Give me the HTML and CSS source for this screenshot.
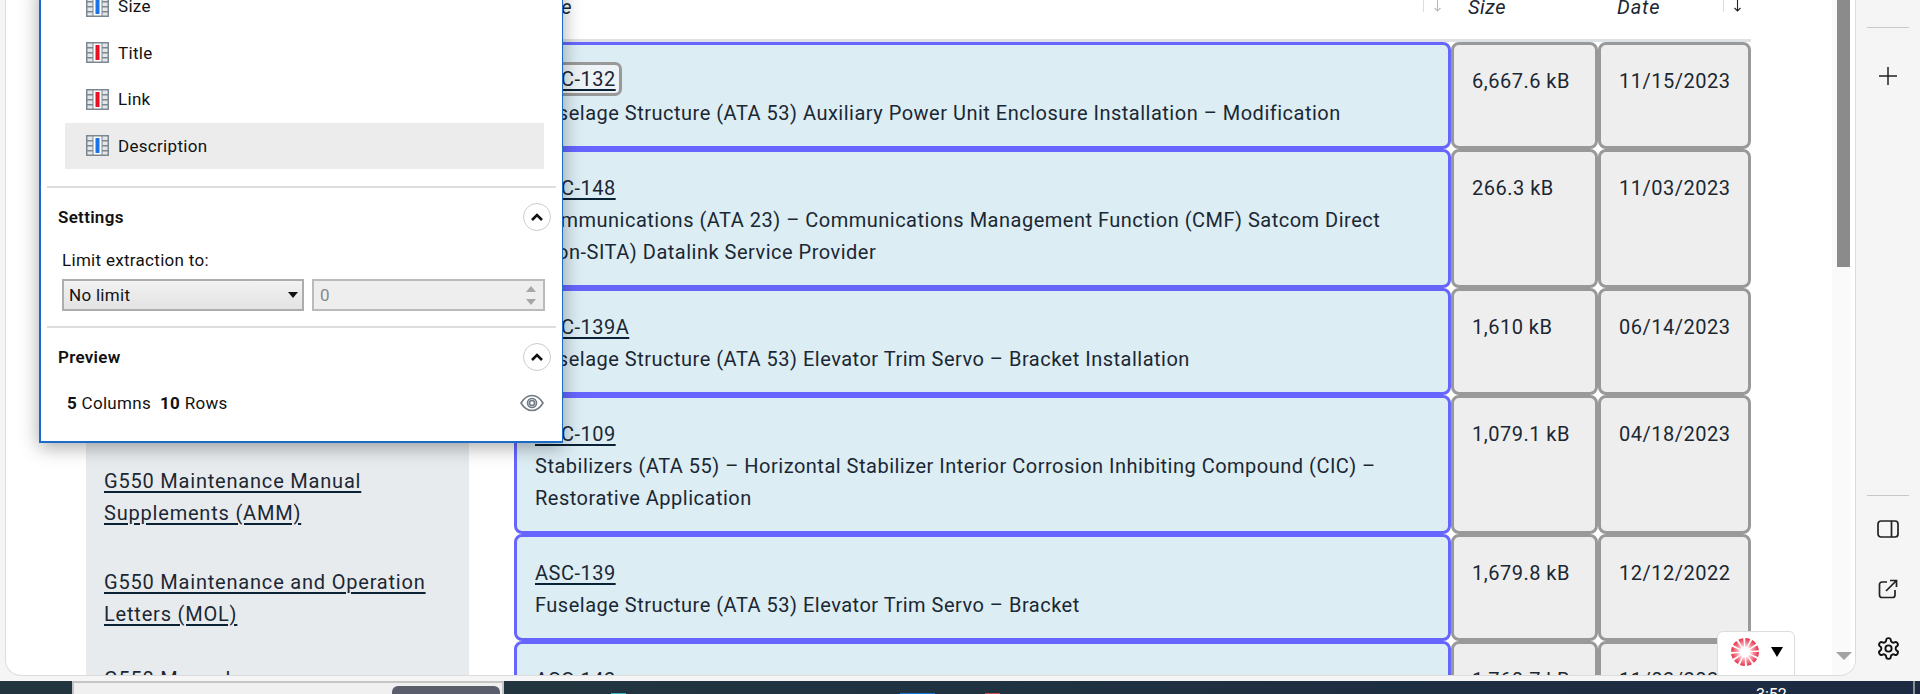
FILE: index.html
```html
<!DOCTYPE html>
<html lang="en">
<head>
    <meta charset="UTF-8">
    <meta name="viewport" content="width=device-width, initial-scale=1.0">
    <title>Service Bulletins</title>
    <link rel="stylesheet" href="styles.css">
</head>
<body>
    <svg class="defs" width="0" height="0">
        <symbol id="col" viewBox="0 0 23 21">
            <rect width="23" height="21" fill="#7d8790"/>
            <g fill="#e4e7ea">
                <rect x="1.5" y="1.5" width="5" height="3.5"/><rect x="1.5" y="6.5" width="5" height="3.5"/><rect x="1.5" y="11.5" width="5" height="3.5"/><rect x="1.5" y="16.5" width="5" height="3"/>
                <rect x="16.5" y="1.5" width="5" height="3.5"/><rect x="16.5" y="6.5" width="5" height="3.5"/><rect x="16.5" y="11.5" width="5" height="3.5"/><rect x="16.5" y="16.5" width="5" height="3"/>
            </g>
            <rect x="7.5" y="1.5" width="8" height="18" fill="#fff"/>
            <rect x="9.5" y="3" width="4" height="15" fill="currentColor"/>
        </symbol>
        <symbol id="chev" viewBox="0 0 28 28">
            <path d="M9 17l5-5 5 5" fill="none" stroke="#111" stroke-width="2.6"/>
        </symbol>
        <symbol id="sort-arrow" viewBox="0 0 9 13">
            <path d="M4.500 0v12M1.500 9l3 3 3-3" fill="none" stroke="currentColor" stroke-width="1.100"/>
        </symbol>
    </svg>

    <div class="browser">
        <div class="window">
            <div class="main">
                <nav class="side-nav">
                    <a href="#">G550 Maintenance Manual Supplements (AMM)</a>
                    <a href="#">G550 Maintenance and Operation Letters (MOL)</a>
                    <a href="#" class="nav-last">G550 Manuals</a>
                </nav>

                <table class="doc-table">
                    <colgroup>
                        <col class="col-title"><col class="col-size"><col class="col-date">
                    </colgroup>
                    <thead>
                        <tr>
                            <th><div class="th-inner"><span>Title</span><span class="sort"><svg width="9" height="13"><use href="#sort-arrow"/></svg></span></div></th>
                            <th class="th-size">Size</th>
                            <th class="th-date"><div class="th-inner"><span>Date</span><span class="sort sort-active"><svg width="9" height="13"><use href="#sort-arrow"/></svg></span></div></th>
                        </tr>
                    </thead>
                    <tbody>
                        <tr>
                            <td class="doc"><a href="#" class="focused">ASC-132</a>Fuselage Structure (ATA 53) Auxiliary Power Unit Enclosure Installation – Modification</td>
                            <td class="meta">6,667.6 kB</td>
                            <td class="meta">11/15/2023</td>
                        </tr>
                        <tr>
                            <td class="doc"><a href="#">ASC-148</a><br>Communications (ATA 23) – Communications Management Function (CMF) Satcom Direct<br>(Non-SITA) Datalink Service Provider</td>
                            <td class="meta">266.3 kB</td>
                            <td class="meta">11/03/2023</td>
                        </tr>
                        <tr>
                            <td class="doc"><a href="#">ASC-139A</a><br>Fuselage Structure (ATA 53) Elevator Trim Servo – Bracket Installation</td>
                            <td class="meta">1,610 kB</td>
                            <td class="meta">06/14/2023</td>
                        </tr>
                        <tr>
                            <td class="doc"><a href="#">ASC-109</a><br>Stabilizers (ATA 55) – Horizontal Stabilizer Interior Corrosion Inhibiting Compound (CIC) – Restorative Application</td>
                            <td class="meta">1,079.1 kB</td>
                            <td class="meta">04/18/2023</td>
                        </tr>
                        <tr>
                            <td class="doc"><a href="#">ASC-139</a><br>Fuselage Structure (ATA 53) Elevator Trim Servo – Bracket</td>
                            <td class="meta">1,679.8 kB</td>
                            <td class="meta">12/12/2022</td>
                        </tr>
                        <tr>
                            <td class="doc"><a href="#">ASC-142</a><br>Fuselage Structure (ATA 53)</td>
                            <td class="meta">1,760.7 kB</td>
                            <td class="meta">11/02/2023</td>
                        </tr>
                    </tbody>
                </table>

                <div class="scrollbar">
                    <div class="scroll-thumb"></div>
                    <div class="scroll-down"></div>
                </div>
            </div>

            <!-- extraction panel, lies over the page -->
            <div class="popup">
                <ul class="col-list">
                    <li class="blue"><svg class="col-icon"><use href="#col"/></svg>Size</li>
                    <li class="red"><svg class="col-icon"><use href="#col"/></svg>Title</li>
                    <li class="red"><svg class="col-icon"><use href="#col"/></svg>Link</li>
                    <li class="blue selected"><svg class="col-icon"><use href="#col"/></svg>Description</li>
                </ul>
                <hr class="popup-sep">
                <div class="section-head">
                    <span>Settings</span>
                    <span class="round-btn"><svg width="28" height="28"><use href="#chev"/></svg></span>
                </div>
                <div class="settings">
                    <div class="limit-label">Limit extraction to:</div>
                    <div class="limit-row">
                        <div class="fake-select">No limit<span class="select-arrow"></span></div>
                        <div class="fake-number">0<span class="spin"><i class="spin-up"></i><i class="spin-down"></i></span></div>
                    </div>
                </div>
                <hr class="popup-sep popup-sep-tight">
                <div class="section-head">
                    <span>Preview</span>
                    <span class="round-btn"><svg width="28" height="28"><use href="#chev"/></svg></span>
                </div>
                <div class="stats">
                    <span><b>5</b> Columns &nbsp;<b>10</b> Rows</span>
                    <svg width="24" height="18" viewBox="0 0 24 18" fill="none" stroke="#6f7a84" stroke-width="1.6">
                        <path d="M1 9C4 4 8 1.5 12 1.5S20 4 23 9c-3 5-7 7.5-11 7.5S4 14 1 9z"/>
                        <circle cx="12" cy="9" r="4.5"/>
                        <circle cx="12" cy="9" r="2.5"/>
                    </svg>
                </div>
            </div>

            <div class="widget">
                <svg width="28" height="28" viewBox="0 0 28 28">
                    <defs>
                        <radialGradient id="burst" gradientUnits="userSpaceOnUse" cx="14" cy="14" r="14">
                            <stop offset="0.3" stop-color="#fff"/>
                            <stop offset="0.6" stop-color="#f6939f"/>
                            <stop offset="1" stop-color="#e8304a"/>
                        </radialGradient>
                    </defs>
                    <circle cx="14" cy="14" r="9.500" fill="none" stroke="url(#burst)" stroke-width="9" stroke-dasharray="3.400 1.570"/>
                </svg>
                <span class="widget-arrow"></span>
            </div>
        </div>

        <aside class="rail">
            <div class="rail-sep"></div>
            <svg class="rail-plus" width="18" height="18" viewBox="0 0 18 18" stroke="#222" stroke-width="1.5">
                <path d="M9 0v18M0 9h18"/>
            </svg>
            <div class="rail-sep rail-sep-low"></div>
            <svg class="rail-panel" width="22" height="18" viewBox="0 0 22 18" fill="none" stroke="#222" stroke-width="1.7">
                <rect x="1" y="1" width="20" height="16" rx="3"/>
                <path d="M14.500 1v16"/>
            </svg>
            <svg class="rail-ext" width="20" height="20" viewBox="0 0 20 20" fill="none" stroke="#222" stroke-width="1.7">
                <path d="M9 3H4a2.500 2.500 0 0 0-2.500 2.500V16A2.500 2.500 0 0 0 4 18.500h10.500A2.500 2.500 0 0 0 17 16v-5"/>
                <path d="M8 12L18.500 1.500M12 1.500h6.500V8"/>
            </svg>
            <svg class="rail-gear" width="25" height="25" viewBox="0 0 24 24" fill="none" stroke="#111" stroke-width="1.8">
                <path d="M12.220 2h-.44a2 2 0 0 0-2 2v.18a2 2 0 0 1-1 1.730l-.43.25a2 2 0 0 1-2 0l-.15-.08a2 2 0 0 0-2.730.73l-.22.38a2 2 0 0 0 .73 2.730l.15.1a2 2 0 0 1 1 1.720v.51a2 2 0 0 1-1 1.740l-.15.09a2 2 0 0 0-.73 2.730l.22.38a2 2 0 0 0 2.730.73l.15-.08a2 2 0 0 1 2 0l.43.25a2 2 0 0 1 1 1.730V20a2 2 0 0 0 2 2h.44a2 2 0 0 0 2-2v-.18a2 2 0 0 1 1-1.730l.43-.25a2 2 0 0 1 2 0l.15.08a2 2 0 0 0 2.730-.73l.22-.39a2 2 0 0 0-.73-2.730l-.15-.08a2 2 0 0 1-1-1.740v-.5a2 2 0 0 1 1-1.740l.15-.09a2 2 0 0 0 .73-2.730l-.22-.38a2 2 0 0 0-2.730-.73l-.15.08a2 2 0 0 1-2 0l-.43-.25a2 2 0 0 1-1-1.730V4a2 2 0 0 0-2-2z"/>
                <circle cx="12" cy="12" r="3"/>
            </svg>
        </aside>
    </div>

    <div class="taskbar">
        <div class="task-start"></div>
        <div class="task-search"><span class="task-search-btn"></span></div>
        <div class="task-tray">
            <i class="tray-teal"></i>
            <i class="tray-blue"></i>
            <i class="tray-red"></i>
            <span class="clock">3:52</span>
            <i class="tray-line"></i>
        </div>
    </div>
</body>
</html>
```

FILE: styles.css
```css
* {
    box-sizing: border-box;
}
html, body {
    margin: 0;
    height: 694px;
    overflow: hidden;
}
body {
    font-family: Roboto, "Open Sans", sans-serif;
    color: #1b2733;
    background: #f5f5f5;
}
a {
    color: #1b2733;
    text-decoration: underline;
    text-decoration-thickness: 2px;
    text-decoration-color: #0a2235;
    text-underline-offset: 3px;
}
.defs {
    position: absolute;
}

.browser {
    display: flex;
    height: 681px;
    padding-left: 5px;
}
.window {
    position: relative;
    width: 1851px;
    height: 676px;
    border: 1px solid #dcdcdc;
    border-top: 0;
    border-radius: 0 0 16px 16px;
    background: #fff;
    overflow: hidden;
}
.main {
    display: flex;
    height: 100%;
    padding-left: 80px;
}

/* left nav */
.side-nav {
    flex: 0 0 383px;
    display: flex;
    flex-direction: column;
    gap: 37px;
    padding: 465px 18px 0;
    background: #e8ebee;
    font-size: 20px;
    line-height: 32px;
    letter-spacing: 0.8px;
}
.nav-last {
    margin-top: -4px;
}

/* table */
.doc-table {
    flex: 0 0 1237px;
    width: 1237px;
    height: 0;
    margin-top: -9px;
    margin-left: 45px;
    table-layout: fixed;
    border-collapse: separate;
    border-spacing: 0;
    font-size: 20px;
    line-height: 32px;
    letter-spacing: 0.5px;
}
.col-title {
    width: 937px;
}
.col-size {
    width: 147px;
}
.col-date {
    width: 153px;
}
.doc-table th {
    height: 51px;
    padding: 0 0 0 18px;
    border-bottom: 3px solid #dee2e6;
    text-align: left;
    vertical-align: top;
    font-style: italic;
    font-weight: 400;
}
.doc-table .th-size {
    padding-left: 17px;
}
.doc-table .th-date {
    padding-left: 19px;
    letter-spacing: 0.9px;
}
.th-inner {
    display: flex;
    justify-content: space-between;
}
.sort {
    display: flex;
    justify-content: center;
    width: 27px;
    height: 21px;
    margin-right: 1px;
    border-left: 1px solid #ddd;
    color: #bbb;
}
.sort svg {
    margin-top: 8px;
}
.sort-active {
    color: #222;
}
.doc-table td {
    padding: 20px 18px 17px;
    border: 3px solid;
    border-radius: 8px;
    vertical-align: top;
}
.doc {
    border-color: #6666ff !important;
    background: #dcedf4;
}
.meta {
    border-color: #999 !important;
    background: #eee;
    white-space: nowrap;
}
.focused {
    display: block;
    width: fit-content;
    margin: 0 0 4px;
    padding-right: 3px;
    line-height: 28px;
    background: #edf3f6;
    border-radius: 4px;
    outline: 3px solid #999;
}

/* scrollbar */
.scrollbar {
    margin-left: auto;
    width: 23px;
    height: 100%;
    display: flex;
    flex-direction: column;
    justify-content: space-between;
    padding: 0 5px 15px 5px;
    background: linear-gradient(to right, #fafafa 18px, #fff 18px);
}
.scroll-thumb {
    width: 13px;
    height: 267px;
    background: #8b8b8b;
}
.scroll-down {
    width: 0;
    height: 0;
    margin-left: -1px;
    border-left: 8px solid transparent;
    border-right: 8px solid transparent;
    border-top: 8px solid #a3a3a3;
}

/* popup */
.popup {
    position: absolute;
    top: -17px;
    left: 33px;
    width: 524px;
    height: 460px;
    background: #fff;
    border: 2px solid #1a6cc8;
    border-top: 0;
    border-right-width: 1px;
    box-shadow: 0 4px 18px rgba(0, 0, 0, 0.35);
    font-size: 17px;
    letter-spacing: 0.3px;
    color: #111;
}
.col-list {
    list-style: none;
    margin: 0 18px 0 24px;
    padding: 0;
}
.col-list li {
    display: flex;
    align-items: center;
    gap: 9px;
    height: 46.5px;
    padding-left: 21px;
}
.col-icon {
    width: 23px;
    height: 21px;
}
.blue .col-icon {
    color: #1a73e8;
}
.red .col-icon {
    color: #e81123;
}
.selected {
    background: #ececec;
}
.popup-sep {
    margin: 17px 6px 0;
    height: 2px;
    border: 0;
    background: #ddd;
}
.popup-sep-tight {
    margin-top: 15px;
}
.section-head {
    display: flex;
    justify-content: space-between;
    align-items: center;
    height: 58px;
    padding: 0 11px 0 17px;
    font-weight: 600;
}
.settings {
    padding: 4px 17px 0 21px;
}
.round-btn {
    display: block;
    width: 28px;
    height: 28px;
    border: 1.5px solid #ccc;
    border-radius: 50%;
    overflow: hidden;
}
.round-btn svg {
    display: block;
    margin: -1.5px;
}
.limit-label {
    line-height: 20px;
    margin-bottom: 9px;
}
.limit-row {
    display: flex;
    gap: 8px;
}
.fake-select {
    display: flex;
    align-items: center;
    justify-content: space-between;
    width: 242px;
    height: 32px;
    padding: 0 4px 0 5px;
    border: 2px solid #adadad;
    background: linear-gradient(#f2f2f2, #e3e3e3);
}
.select-arrow {
    width: 0;
    height: 0;
    border-left: 5px solid transparent;
    border-right: 5px solid transparent;
    border-top: 6px solid #111;
}
.fake-number {
    display: flex;
    align-items: center;
    justify-content: space-between;
    flex: 1;
    height: 32px;
    padding: 0 7px 0 6px;
    border: 2px solid #bbb;
    background: #eee;
    color: #888;
}
.spin {
    display: flex;
    flex-direction: column;
    gap: 7px;
}
.spin i {
    display: block;
    width: 0;
    height: 0;
    border-left: 5px solid transparent;
    border-right: 5px solid transparent;
}
.spin-up {
    border-bottom: 6px solid #a6a6a6;
}
.spin-down {
    border-top: 6px solid #a6a6a6;
}
.stats {
    display: flex;
    justify-content: space-between;
    align-items: center;
    margin-top: 7px;
    padding: 0 18px 0 26px;
    line-height: 20px;
}

/* floating widget */
.widget {
    position: absolute;
    top: 631px;
    right: 60px;
    display: flex;
    align-items: center;
    gap: 12px;
    width: 78px;
    height: 50px;
    padding: 0 0 8px 13px;
    background: #fff;
    border: 1px solid #ddd;
    border-radius: 6px;
}
.widget-arrow {
    width: 0;
    height: 0;
    border-left: 6px solid transparent;
    border-right: 6px solid transparent;
    border-top: 10px solid #000;
}

/* right rail */
.rail {
    flex: 1;
    display: flex;
    flex-direction: column;
    align-items: center;
    padding-top: 27px;
}
.rail-sep {
    width: 42px;
    height: 1px;
    background: #c8c8c8;
}
.rail-plus {
    margin-top: 39px;
}
.rail-sep-low {
    margin-top: 410px;
}
.rail-panel {
    margin-top: 24px;
}
.rail-ext {
    margin-top: 41px;
}
.rail-gear {
    margin-top: 37px;
}

/* taskbar */
.taskbar {
    display: flex;
    height: 13px;
    background: #22353f;
}
.task-start {
    width: 72px;
}
.task-search {
    width: 432px;
    padding-left: 318px;
    padding-top: 3px;
    border: 2px solid #c4c4c4;
    border-bottom: 0;
    background: #f0f0f0;
}
.task-search-btn {
    display: block;
    width: 108px;
    height: 12px;
    border-radius: 6px 6px 0 0;
    background: #5a5d6b;
}
.task-tray {
    position: relative;
    flex: 1;
    display: flex;
    align-items: flex-end;
    background: linear-gradient(to right, #22353f, #1c2a42);
    overflow: hidden;
}
.task-tray i {
    display: block;
    height: 1px;
}
.tray-teal {
    width: 15px;
    margin-left: 107px;
    background: #35b6c6;
}
.tray-blue {
    width: 35px;
    margin-left: 274px;
    background: #1877d6;
}
.tray-red {
    width: 15px;
    margin-left: 50px;
    background: #d2504c;
}
.clock {
    align-self: flex-start;
    margin-left: 756px;
    margin-top: 5px;
    width: 32px;
    font-size: 16px;
    line-height: 18px;
    color: #fff;
}
.task-tray .tray-line {
    width: 2px;
    height: 13px;
    margin-left: 125px;
    background: #8a8f96;
}
```
